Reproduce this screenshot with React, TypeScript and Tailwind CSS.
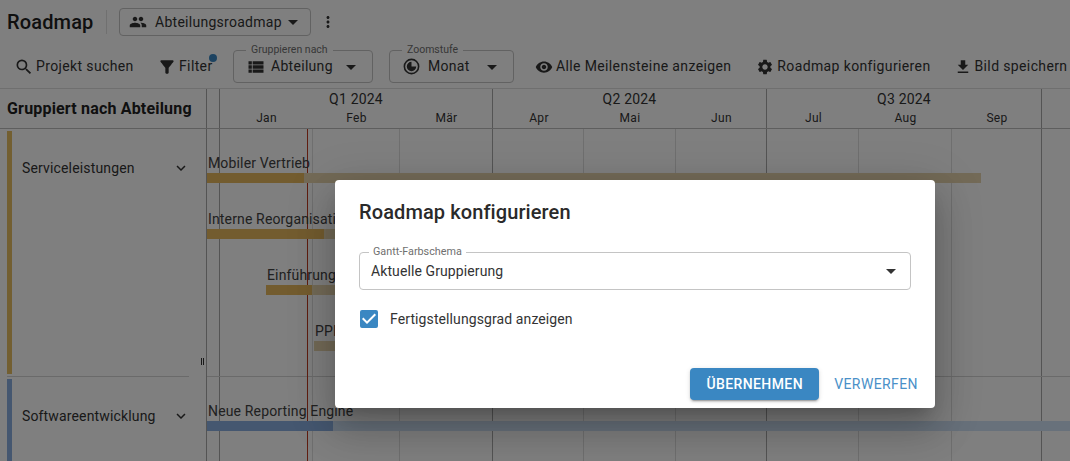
import { MdPeople, MdArrowDropDown, MdMoreVert, MdSearch, MdFilterAlt, MdViewList, MdVisibility, MdSettings, MdFileDownload, MdExpandMore, MdCheckBox } from "react-icons/md";

const font = { fontFamily: "Roboto, sans-serif" };
const months = [
  ["Jan", "w-[93px]"], ["Feb", "w-[87px]"], ["Mär", "w-[93px]"],
  ["Apr", "w-[91px]"], ["Mai", "w-[92px]"], ["Jun", "w-[91px]"],
  ["Jul", "w-[92px]"], ["Aug", "w-[93px]"], ["Sep", "w-[90px]"],
];
const quarters = [["Q1 2024", "w-[273px]"], ["Q2 2024", "w-[274px]"], ["Q3 2024", "w-[275px]"]];

function Bar({ top, left, label, labelLeft, dark, light, tone }: { top: string; left: string; label: string; labelLeft: string; dark: string; light: string; tone: "gold" | "blue" | "pale" }) {
  const d = tone === "gold" ? "bg-[#e6b95e]" : tone === "blue" ? "bg-[#8aaee0]" : "bg-[#e6d5ae]";
  const l = tone === "blue" ? "bg-[#d0e2f6]" : "bg-[#e6d5ae]";
  return (
    <div className={`absolute ${top} left-0 w-full`}>
      <div className={`absolute top-0 ${labelLeft} text-[14px] leading-[20px] tracking-[0.15px] whitespace-nowrap text-[#424242]`}>{label}</div>
      <div className={`absolute top-[20px] ${left} ${light} h-[10px] ${l}`} />
      <div className={`absolute top-[20px] ${left} ${dark} h-[10px] ${d}`} />
    </div>
  );
}

function Tool({ icon, label, className }: { icon: React.ReactNode; label: string; className: string }) {
  return (
    <div className={`flex items-center ${className} text-[14px] tracking-[0.37px] text-[#333] whitespace-nowrap`}>
      {icon}
      <span>{label}</span>
    </div>
  );
}

function Outlined({ label, icon, value, className, gap }: { label: string; icon: React.ReactNode; value: string; className: string; gap: string }) {
  return (
    <div className={`relative h-[33px] border border-[#c4c4c4] rounded-[4px] flex items-center pl-[12px] ${className}`}>
      <span className="absolute -top-[8px] left-[12px] bg-white px-[5px] text-[10.5px] leading-[14px] text-[#6f6f6f] whitespace-nowrap">{label}</span>
      {icon}
      <span className={`${gap} text-[14px] tracking-[0.3px] text-[#333]`}>{value}</span>
      <MdArrowDropDown size={24} className="absolute right-[9px] top-[4px] text-[#333]" />
    </div>
  );
}

function ZoomIcon() {
  return (
    <svg width="19" height="19" viewBox="0 0 24 24" className="text-[#333]" fill="currentColor">
      <path fillRule="evenodd" d="M12 2a10 10 0 1 0 0 20 10 10 0 0 0 0-20zm0 18a8 8 0 1 1 0-16 8 8 0 0 1 0 16z" />
      <path d="M12 12V6a6 6 0 1 0 6 6z" />
    </svg>
  );
}

export default function App() {
  return (
    <div className="relative w-[1070px] h-[461px] overflow-hidden bg-white" style={font}>
      {/* title row */}
      <div className="h-[44px] flex items-center pl-[7px]">
        <h1 className="text-[20px] font-medium tracking-[0.15px] text-[#212121] leading-none w-[88px]">Roadmap</h1>
        <div className="h-[24px] w-px bg-[#e0e0e0] ml-[11px]" />
        <div className="ml-[12px] h-[28px] w-[192px] border border-[#c4c4c4] rounded-[4px] flex items-center pl-[9px]">
          <MdPeople size={18} className="text-[#333]" />
          <span className="ml-[8px] text-[14px] tracking-[0.27px] text-[#333]">Abteilungsroadmap</span>
          <MdArrowDropDown size={24} className="text-[#333] ml-[-1px]" />
        </div>
        <MdMoreVert size={18} className="ml-[8px] text-[#333]" />
      </div>
      {/* toolbar */}
      <div className="h-[44px] flex items-center pl-[14px] pt-[1px]">
        <Tool icon={<MdSearch size={20} className="mr-[2px] text-[#333]" />} label="Projekt suchen" className="w-[144px]" />
        <div className="relative w-[75px] -ml-[1px] mr-[1px]">
          <Tool icon={<MdFilterAlt size={20} className="mr-[2px] text-[#333]" />} label="Filter" className="" />
          <span className="absolute -top-[2px] left-[52px] w-[8px] h-[8px] rounded-full bg-[#3a87c2]" />
        </div>
        <Outlined label="Gruppieren nach" icon={<MdViewList size={20} className="text-[#333]" />} value="Abteilung" className="w-[140px] mr-[16px]" gap="ml-[5px]" />
        <Outlined label="Zoomstufe" icon={<ZoomIcon />} value="Monat" className="w-[125px] mr-[21px]" gap="ml-[7px]" />
        <Tool icon={<MdVisibility size={18} className="mr-[3px] text-[#333]" />} label="Alle Meilensteine anzeigen" className="mr-[25px]" />
        <Tool icon={<MdSettings size={18} className="mr-[3px] text-[#333]" />} label="Roadmap konfigurieren" className="mr-[24px]" />
        <Tool icon={<MdFileDownload size={18} className="mr-[2px] text-[#333]" />} label="Bild speichern" className="" />
      </div>
      {/* gantt header */}
      <div className="flex h-[41px] border-t border-b border-t-[#dedede] border-b-[#bdbdbd]">
        <div className="w-[206px] pl-[7px] flex items-center text-[16px] font-bold tracking-[0.18px] text-[#212121] whitespace-nowrap">Gruppiert nach Abteilung</div>
        <div className="w-[13px] border-l border-[#a8a8a8]" />
        <div className="flex-1 flex flex-col border-l border-[#a8a8a8] overflow-hidden">
          <div className="flex h-[20px]">
            {quarters.map(([q, w]) => (
              <div key={q} className={`${w} shrink-0 text-center text-[14px] leading-[20px] tracking-[0.2px] text-[#333] border-r border-[#a8a8a8]`}>{q}</div>
            ))}
          </div>
          <div className="flex h-[19px] -ml-px">
            {months.map(([m, w], i) => (
              <div key={m} className={`${w} shrink-0 pl-[2px] text-center text-[12px] leading-[19px] tracking-[0.3px] text-[#333] ${i > 0 && i % 3 === 0 ? "border-l border-[#a8a8a8]" : ""}`}>{m}</div>
            ))}
            <div className="flex-1 border-l border-[#a8a8a8]" />
          </div>
        </div>
      </div>
      {/* gantt body */}
      <div className="flex h-[332px]">
        <div className="w-[206px] shrink-0 relative">
          <div className="h-[247px] pt-[2px] pl-[7px] pr-[16px] flex">
            <div className="w-[5px] h-[243px] bg-[#e6be63] shrink-0" />
            <div className="flex-1 h-[74px] flex items-center justify-between pl-[10px] text-[14px] tracking-[0.15px] text-[#333]">
              <span>Serviceleistungen</span>
              <MdExpandMore size={18} className="text-[#333]" />
            </div>
          </div>
          <div className="ml-[7px] mr-[17px] h-px bg-[#d4d4d4]" />
          <div className="pt-[2px] pl-[7px] pr-[16px] flex">
            <div className="w-[5px] h-[120px] bg-[#8aaee0] shrink-0" />
            <div className="flex-1 h-[74px] flex items-center justify-between pl-[10px] text-[14px] tracking-[0.15px] text-[#333]">
              <span>Softwareentwicklung</span>
              <MdExpandMore size={18} className="text-[#333]" />
            </div>
          </div>
          <span className="absolute right-[2px] top-[229px] flex gap-[1px]">
            <span className="w-px h-[7px] bg-[#333]" />
            <span className="w-px h-[7px] bg-[#333]" />
          </span>
        </div>
        <div className="flex-1 relative border-l border-[#a8a8a8]">
          <div className="absolute inset-0 flex pl-[12px]">
            {months.map(([m, w], i) => (
              <div key={m} className={`${w} shrink-0 border-l ${i % 3 === 0 ? "border-[#a8a8a8]" : "border-[#dedede]"}`} />
            ))}
            <div className="flex-1 border-l border-[#a8a8a8]" />
          </div>
          <div className="absolute left-0 right-0 top-[247px] h-px bg-[#d4d4d4]" />
          <div className="absolute top-0 bottom-0 left-[100px] w-px bg-[#c03a20]" />
          <Bar top="top-[24px]" labelLeft="left-[1px]" left="left-0" dark="w-[97px]" light="w-[774px]" tone="gold" label="Mobiler Vertrieb" />
          <Bar top="top-[80px]" labelLeft="left-[1px]" left="left-0" dark="w-[117px]" light="w-[400px]" tone="gold" label="Interne Reorganisation" />
          <Bar top="top-[136px]" labelLeft="left-[60px]" left="left-[59px]" dark="w-[46px]" light="w-[300px]" tone="gold" label="Einführung" />
          <Bar top="top-[192px]" labelLeft="left-[108px]" left="left-[107px]" dark="w-[100px]" light="w-[100px]" tone="pale" label="PPI" />
          <Bar top="top-[272px]" labelLeft="left-[1px]" left="left-0" dark="w-[126px]" light="w-[863px]" tone="blue" label="Neue Reporting Engine" />
        </div>
      </div>
      {/* backdrop */}
      <div className="absolute inset-0 bg-black/50" />
      {/* dialog */}
      <div className="absolute left-[335px] top-[180px] w-[600px] h-[228px] bg-white rounded-[4px] shadow-[0_11px_15px_-7px_rgba(0,0,0,0.2),0_24px_38px_3px_rgba(0,0,0,0.14),0_9px_46px_8px_rgba(0,0,0,0.12)] flex flex-col">
        <h2 className="pl-[24px] pt-[20px] text-[20px] font-medium leading-[24px] tracking-[0.1px] text-[#2a2a2a]">Roadmap konfigurieren</h2>
        <div className="relative mx-[24px] mt-[28px] h-[38px] border border-[#c4c4c4] rounded-[4px] flex items-center pl-[11px] text-[14px] tracking-[0.1px] text-[#333]">
          <span className="absolute -top-[8px] left-[9px] bg-white px-[4px] text-[10.8px] leading-[14px] tracking-normal text-[#6f6f6f]">Gantt-Farbschema</span>
          Aktuelle Gruppierung
          <MdArrowDropDown size={24} className="absolute right-[7px] top-[6px] text-[#333]" />
        </div>
        <div className="flex items-center pl-[22px] mt-[17px] h-[24px]">
          <MdCheckBox size={24} className="text-[#3a87c2]" />
          <span className="ml-[9px] text-[14px] tracking-[0.1px] text-[#333]">Fertigstellungsgrad anzeigen</span>
        </div>
        <div className="flex items-center justify-end mt-auto pb-[8px] pr-[16px]">
          <button className="h-[32px] w-[129px] rounded-[4px] bg-[#3a87c2] text-white text-[14px] font-medium tracking-[0.4px] shadow-[0_3px_1px_-2px_rgba(0,0,0,0.2),0_2px_2px_0_rgba(0,0,0,0.14),0_1px_5px_0_rgba(0,0,0,0.12)]">ÜBERNEHMEN</button>
          <button className="ml-[15px] mr-[1px] text-[#4a90c8] text-[14px] tracking-[0.4px]">VERWERFEN</button>
        </div>
      </div>
    </div>
  );
}
